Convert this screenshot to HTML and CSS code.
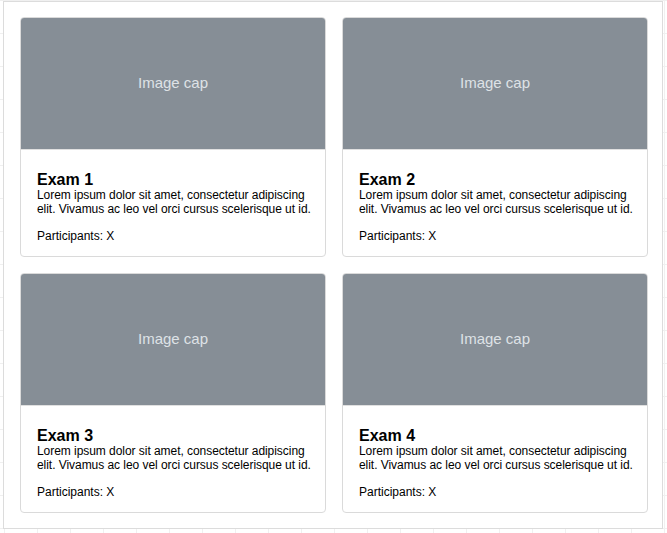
FILE: index.html
```html
<!DOCTYPE html>
<html>
<head>
<meta charset="utf-8">
<link rel="stylesheet" href="styles.css">
</head>
<body>
<div class="frame">
  <div class="grid">
    <div class="card">
      <div class="cap">Image cap</div>
      <div class="body">
        <h5 class="title">Exam 1</h5>
        <p class="text">Lorem ipsum dolor sit amet, consectetur adipiscing elit. Vivamus ac leo vel orci cursus scelerisque ut id.</p>
        <p class="meta">Participants: X</p>
      </div>
    </div>
    <div class="card">
      <div class="cap">Image cap</div>
      <div class="body">
        <h5 class="title">Exam 2</h5>
        <p class="text">Lorem ipsum dolor sit amet, consectetur adipiscing elit. Vivamus ac leo vel orci cursus scelerisque ut id.</p>
        <p class="meta">Participants: X</p>
      </div>
    </div>
    <div class="card">
      <div class="cap">Image cap</div>
      <div class="body">
        <h5 class="title">Exam 3</h5>
        <p class="text">Lorem ipsum dolor sit amet, consectetur adipiscing elit. Vivamus ac leo vel orci cursus scelerisque ut id.</p>
        <p class="meta">Participants: X</p>
      </div>
    </div>
    <div class="card">
      <div class="cap">Image cap</div>
      <div class="body">
        <h5 class="title">Exam 4</h5>
        <p class="text">Lorem ipsum dolor sit amet, consectetur adipiscing elit. Vivamus ac leo vel orci cursus scelerisque ut id.</p>
        <p class="meta">Participants: X</p>
      </div>
    </div>
  </div>
</div>
</body>
</html>
```

FILE: styles.css
```css
html, body {
  margin: 0;
  padding: 0;
}
body {
  width: 667px;
  height: 533px;
  overflow: hidden;
  font-family: "Liberation Sans", Arial, sans-serif;
  color: #000;
  background-color: #fff;
  background-image:
    linear-gradient(to right, #f0f0f0 1px, transparent 1px),
    linear-gradient(to bottom, #f0f0f0 1px, transparent 1px);
  background-size: 33px 33px;
  background-position: 4px 0;
  padding: 1px 0 0 3px;
  box-sizing: border-box;
}
.frame {
  width: 660px;
  height: 528px;
  box-sizing: border-box;
  background: #fff;
  border: 1px solid #dcdcdc;
  padding: 15px 0 0 16px;
}
.grid {
  display: grid;
  grid-template-columns: 306px 306px;
  grid-auto-rows: 240px;
  gap: 16px;
}
.card {
  display: flex;
  flex-direction: column;
  border: 1px solid #dadada;
  border-radius: 4px;
  overflow: hidden;
  background: #fff;
}
.cap {
  height: 132px;
  flex: none;
  box-sizing: border-box;
  padding-bottom: 3px;
  background: #868e96;
  color: #dee2e6;
  font-size: 15px;
  display: flex;
  align-items: center;
  justify-content: center;
  border-bottom: 1px solid #e0e0e0;
}
.body {
  padding: 21px 8px 12px 16px;
}
.title {
  margin: 0;
  font-size: 16px;
  font-weight: bold;
  line-height: 18px;
}
.text {
  margin: 0;
  font-size: 12px;
  line-height: 13.5px;
  letter-spacing: -0.05px;
}
.meta {
  margin: 13.5px 0 0 0;
  font-size: 12px;
  line-height: 13.5px;
}
```
